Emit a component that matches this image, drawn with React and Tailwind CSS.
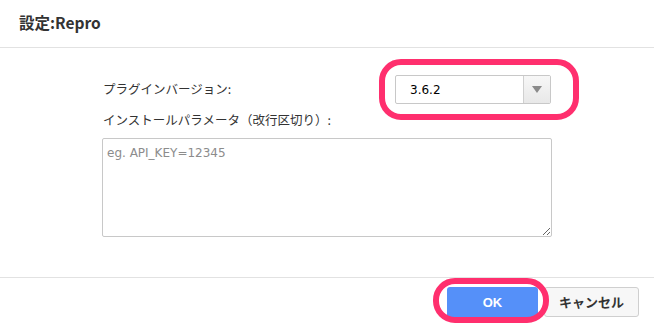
import React from "react";

const jp = { fontFamily: '"Noto Sans CJK JP", "Liberation Sans", sans-serif' };

const Ring = ({ className }) => (
  <div className={`pointer-events-none absolute rounded-[22px] border-[6px] border-[#ff2f6e] ${className}`} />
);

const App = () => {
  return (
    <div className="w-[654px] h-[328px] bg-white text-[#333] overflow-hidden" style={jp}>
      {/* header */}
      <div className="h-[48px] border-b border-[#e2e2e2] flex items-center pl-[19px]">
        <h1 className="text-[15.5px] font-bold text-[#333] pb-[1px]">設定:Repro</h1>
      </div>

      {/* body */}
      <div className="h-[229px] pl-[102px] pt-[27px]">
        <div className="flex items-center h-[29px]">
          <label className="w-[293px] text-[12.5px] pl-[1px]">プラグインバージョン:</label>
          <div className="relative">
            <div className="flex w-[156px] h-[29px] border border-[#c8c8c8] rounded-[2px] bg-white">
              <div className="flex-1 flex items-center pl-[14px] text-[12px] text-black" style={{ fontFamily: '"DejaVu Sans", sans-serif' }}>
                3.6.2
              </div>
              <div className="w-[27px] border-l border-[#d0d0d0] bg-gradient-to-b from-[#f7f7f7] to-[#e8e8e8] flex items-center justify-center">
                <svg width="10" height="7" viewBox="0 0 10 7">
                  <path d="M0 0 H10 L5 7 Z" fill="#8a8a8a" />
                </svg>
              </div>
            </div>
            <Ring className="-left-[16px] -right-[28px] -top-[16px] -bottom-[16px]" />
          </div>
        </div>
        <div className="mt-[7px] h-[18px] leading-[18px] text-[12.5px] pl-[1px]">
          インストールパラメータ（改行区切り）:
        </div>
        <textarea
          className="mt-[9px] block w-[450px] h-[99px] border border-[#c8c8c8] rounded-[2px] px-[4px] py-[5px] text-[12px] text-[#333] placeholder:text-[#8c8c8c] outline-none"
          style={{ fontFamily: '"DejaVu Sans", sans-serif' }}
          placeholder="eg. API_KEY=12345"
        />
      </div>

      {/* footer */}
      <div className="border-t border-[#e2e2e2] flex justify-end items-start pt-[9px] pr-[15px] gap-[6px]">
        <div className="relative">
          <button className="w-[91px] h-[31px] rounded-[3px] bg-[#5590f9] text-white text-[13px] font-bold" style={{ fontFamily: '"Liberation Sans", sans-serif' }}>
            OK
          </button>
          <Ring className="-left-[14px] -right-[11px] -top-[9px] -bottom-[5px]" />
        </div>
        <button className="w-[95px] h-[30px] rounded-[3px] border border-[#cfcfcf] bg-[#f7f7f7] text-[13px] font-bold text-[#333]">
          キャンセル
        </button>
      </div>
    </div>
  );
};

export default App;
